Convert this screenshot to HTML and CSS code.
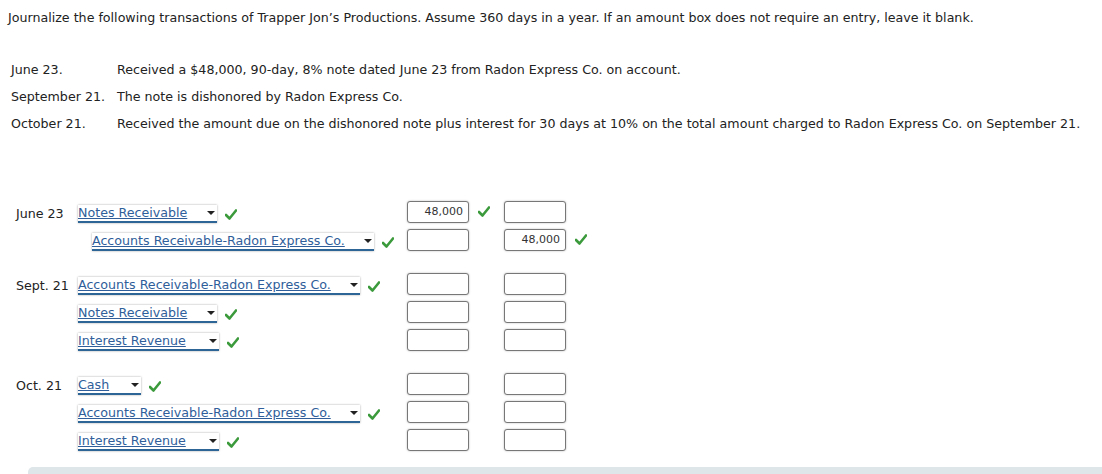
FILE: index.html
```html
<!DOCTYPE html>
<html>
<head>
<meta charset="utf-8">
<link rel="stylesheet" href="styles.css">
</head>
<body>
<div class="page">
  <p class="intro">Journalize the following transactions of Trapper Jon’s Productions. Assume 360 days in a year. If an amount box does not require an entry, leave it blank.</p>

  <div class="txns">
    <div class="tdate">June 23.</div><div class="tdesc">Received a $48,000, 90-day, 8% note dated June 23 from Radon Express Co. on account.</div>
    <div class="tdate">September 21.</div><div class="tdesc">The note is dishonored by Radon Express Co.</div>
    <div class="tdate">October 21.</div><div class="tdesc">Received the amount due on the dishonored note plus interest for 30 days at 10% on the total amount charged to Radon Express Co. on September 21.</div>
  </div>

  <div class="journal">
    <div class="group">
      <div class="row">
        <div class="date">June 23</div>
        <div class="acct"><span class="sel w-notes"><span class="opt">Notes Receivable</span><span class="arrow"></span></span><svg class="chk" viewBox="0 0 12 11"><path d="M1 6 L4.5 9.5 L11 1.5"/></svg></div>
        <div class="amt"><span class="box">48,000</span><svg class="chk" viewBox="0 0 12 11"><path d="M1 6 L4.5 9.5 L11 1.5"/></svg></div>
        <div class="amt"><span class="box"></span></div>
      </div>
      <div class="row">
        <div class="date"></div>
        <div class="acct indent"><span class="sel w-ar"><span class="opt">Accounts Receivable-Radon Express Co.</span><span class="arrow"></span></span><svg class="chk" viewBox="0 0 12 11"><path d="M1 6 L4.5 9.5 L11 1.5"/></svg></div>
        <div class="amt"><span class="box"></span></div>
        <div class="amt"><span class="box">48,000</span><svg class="chk" viewBox="0 0 12 11"><path d="M1 6 L4.5 9.5 L11 1.5"/></svg></div>
      </div>
    </div>

    <div class="group">
      <div class="row">
        <div class="date">Sept. 21</div>
        <div class="acct"><span class="sel w-ar"><span class="opt">Accounts Receivable-Radon Express Co.</span><span class="arrow"></span></span><svg class="chk" viewBox="0 0 12 11"><path d="M1 6 L4.5 9.5 L11 1.5"/></svg></div>
        <div class="amt"><span class="box"></span></div>
        <div class="amt"><span class="box"></span></div>
      </div>
      <div class="row">
        <div class="date"></div>
        <div class="acct"><span class="sel w-notes"><span class="opt">Notes Receivable</span><span class="arrow"></span></span><svg class="chk" viewBox="0 0 12 11"><path d="M1 6 L4.5 9.5 L11 1.5"/></svg></div>
        <div class="amt"><span class="box"></span></div>
        <div class="amt"><span class="box"></span></div>
      </div>
      <div class="row">
        <div class="date"></div>
        <div class="acct"><span class="sel w-int"><span class="opt">Interest Revenue</span><span class="arrow"></span></span><svg class="chk" viewBox="0 0 12 11"><path d="M1 6 L4.5 9.5 L11 1.5"/></svg></div>
        <div class="amt"><span class="box"></span></div>
        <div class="amt"><span class="box"></span></div>
      </div>
    </div>

    <div class="group">
      <div class="row">
        <div class="date">Oct. 21</div>
        <div class="acct"><span class="sel w-cash"><span class="opt">Cash</span><span class="arrow"></span></span><svg class="chk" viewBox="0 0 12 11"><path d="M1 6 L4.5 9.5 L11 1.5"/></svg></div>
        <div class="amt"><span class="box"></span></div>
        <div class="amt"><span class="box"></span></div>
      </div>
      <div class="row">
        <div class="date"></div>
        <div class="acct"><span class="sel w-ar"><span class="opt">Accounts Receivable-Radon Express Co.</span><span class="arrow"></span></span><svg class="chk" viewBox="0 0 12 11"><path d="M1 6 L4.5 9.5 L11 1.5"/></svg></div>
        <div class="amt"><span class="box"></span></div>
        <div class="amt"><span class="box"></span></div>
      </div>
      <div class="row">
        <div class="date"></div>
        <div class="acct"><span class="sel w-int"><span class="opt">Interest Revenue</span><span class="arrow"></span></span><svg class="chk" viewBox="0 0 12 11"><path d="M1 6 L4.5 9.5 L11 1.5"/></svg></div>
        <div class="amt"><span class="box"></span></div>
        <div class="amt"><span class="box"></span></div>
      </div>
    </div>
  </div>

  <div class="footer-bar"></div>
</div>
</body>
</html>
```

FILE: styles.css
```css
html, body {
  margin: 0;
  padding: 0;
  background: #fff;
  overflow: hidden;
}
.page {
  font-family: "DejaVu Sans", Verdana, sans-serif;
  font-size: 12.65px;
  color: #222;
  padding: 10px 0 0 8px;
  height: 474px;
  box-sizing: border-box;
}
.intro {
  margin: 0;
  line-height: 16px;
}
.txns {
  margin: 30px 0 0 3px;
  display: grid;
  grid-template-columns: 106px 1fr;
  grid-auto-rows: 27px;
  align-items: center;
}
.journal {
  margin-top: 61px;
  margin-left: 8px;
  display: flex;
  flex-direction: column;
  gap: 16px;
}
.row {
  display: grid;
  grid-template-columns: 62px 329px 97px 120px;
  height: 28px;
  align-items: center;
}
.date {
  padding-top: 2px;
}
.acct {
  display: flex;
  align-items: center;
  padding-top: 4px;
  height: 24px;
}
.acct.indent {
  padding-left: 14px;
}
.sel {
  position: relative;
  display: inline-block;
  height: 16px;
  line-height: 15px;
  background: #fff;
  box-shadow: 0 0 2px rgba(0,0,0,0.35);
  border-bottom: 2px solid #2d6596;
  color: #2f5e9a;
  box-sizing: content-box;
}
.opt {
  text-decoration: underline;
  text-decoration-color: #2f5e9a;
  white-space: nowrap;
}
.w-notes { width: 139px; }
.w-ar { width: 282px; }
.w-int { width: 141px; }
.w-cash { width: 63px; }
.arrow {
  position: absolute;
  right: 2px;
  top: 6px;
  width: 0;
  height: 0;
  border-left: 4px solid transparent;
  border-right: 4px solid transparent;
  border-top: 4px solid #222;
}
.chk {
  width: 12px;
  height: 11px;
  margin-left: 8px;
  fill: none;
  stroke: #3b9a3b;
  stroke-width: 2.6;
  stroke-linecap: round;
  stroke-linejoin: round;
}
.amt {
  display: flex;
  align-items: center;
}
.amt .chk {
  margin-left: 9px;
  margin-top: -2px;
}
.box {
  display: inline-block;
  height: 20px;
  border: 1px solid #777;
  border-radius: 3px;
  box-shadow: 0 0 2px rgba(0,0,0,0.3);
  background: #fff;
  font-size: 11px;
  line-height: 20px;
  text-align: right;
  padding-right: 5px;
  box-sizing: content-box;
  width: 55px;
  color: #333;
}
.footer-bar {
  margin: 13px 0 0 20px;
  height: 30px;
  background: #dfe6e9;
  border-radius: 5px 0 0 0;
}
```
